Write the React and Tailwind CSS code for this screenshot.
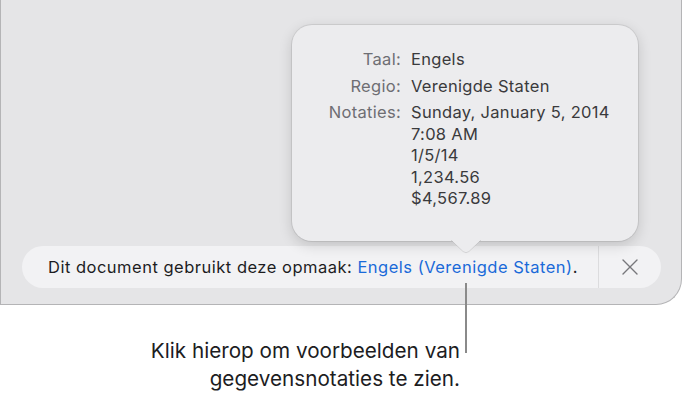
import React from 'react';
import { X } from 'lucide-react';

const rows = [
  { label: 'Taal:', values: ['Engels'] },
  { label: 'Regio:', values: ['Verenigde Staten'] },
  {
    label: 'Notaties:',
    values: ['Sunday, January 5, 2014', '7:08 AM', '1/5/14', '1,234.56', '$4,567.89'],
  },
];

const FormatPopover = () => (
  <div className="absolute left-[291px] top-[25px] w-[346px] rounded-[20px] bg-[#ececee] shadow-[0_0_0_1px_rgba(0,0,0,0.08),0_4px_14px_rgba(0,0,0,0.16)] pt-[24px] pb-[31px] pl-[34px]">
    <div className="grid grid-cols-[75px_auto] gap-x-[10px] gap-y-[5px] text-[16.5px] tracking-[0.3px] leading-[21.5px]">
      {rows.map((row) => (
        <React.Fragment key={row.label}>
          <div className="text-right text-[#6e6e73]">{row.label}</div>
          <div className="text-[#3a3a3c]">
            {row.values.map((v) => (
              <div key={v}>{v}</div>
            ))}
          </div>
        </React.Fragment>
      ))}
    </div>
    {/* pointer */}
    <div className="absolute left-[159px] bottom-[-13px] w-[30px] h-[14px] overflow-hidden">
      <svg width="30" height="14" viewBox="0 0 30 14">
        <path d="M0 0 L12 11.5 Q15 14 18 11.5 L30 0 Z" fill="#ececee" />
        <path d="M0 0 L12 11.5 Q15 14 18 11.5 L30 0" fill="none" stroke="rgba(0,0,0,0.1)" strokeWidth="1" />
      </svg>
    </div>
  </div>
);

const FormatBar = () => (
  <div className="mx-[21px] mb-[16px] h-[42px] w-[639px] rounded-full bg-[#f2f2f4] flex items-center">
    <div className="flex-1 pl-[26px] text-[16.5px] tracking-[0.5px] text-[#1d1d1f] whitespace-nowrap">
      Dit document gebruikt deze opmaak:{' '}
      <span className="text-[#1a6ad9]">Engels (Verenigde Staten)</span>.
    </div>
    <div className="h-full w-px bg-[#dcdcde]" />
    <button className="w-[62px] h-full flex items-center justify-center text-[#77777b]">
      <X size={28} strokeWidth={1.2} />
    </button>
  </div>
);

export default function App() {
  return (
    <div
      className="relative w-[684px] h-[404px] bg-white overflow-hidden"
      style={{ fontFamily: 'Inter, "Noto Sans", sans-serif' }}
    >
      <div className="relative w-[682px] h-[305px] bg-[#e5e5e7] border-l border-b border-r border-[#b4b4b6] rounded-br-[26px] flex flex-col justify-end">
        <FormatBar />
        <FormatPopover />
      </div>

      {/* callout line */}
      <div className="absolute left-[465px] top-[283px] w-[2px] h-[70px] bg-[#8a8a8a]" />

      <div className="pr-[224px] pt-[32px] text-right text-[20.7px] leading-[28px] text-[#1d1d1f]">
        <div>Klik hierop om voorbeelden van</div>
        <div>gegevensnotaties te zien.</div>
      </div>
    </div>
  );
}
